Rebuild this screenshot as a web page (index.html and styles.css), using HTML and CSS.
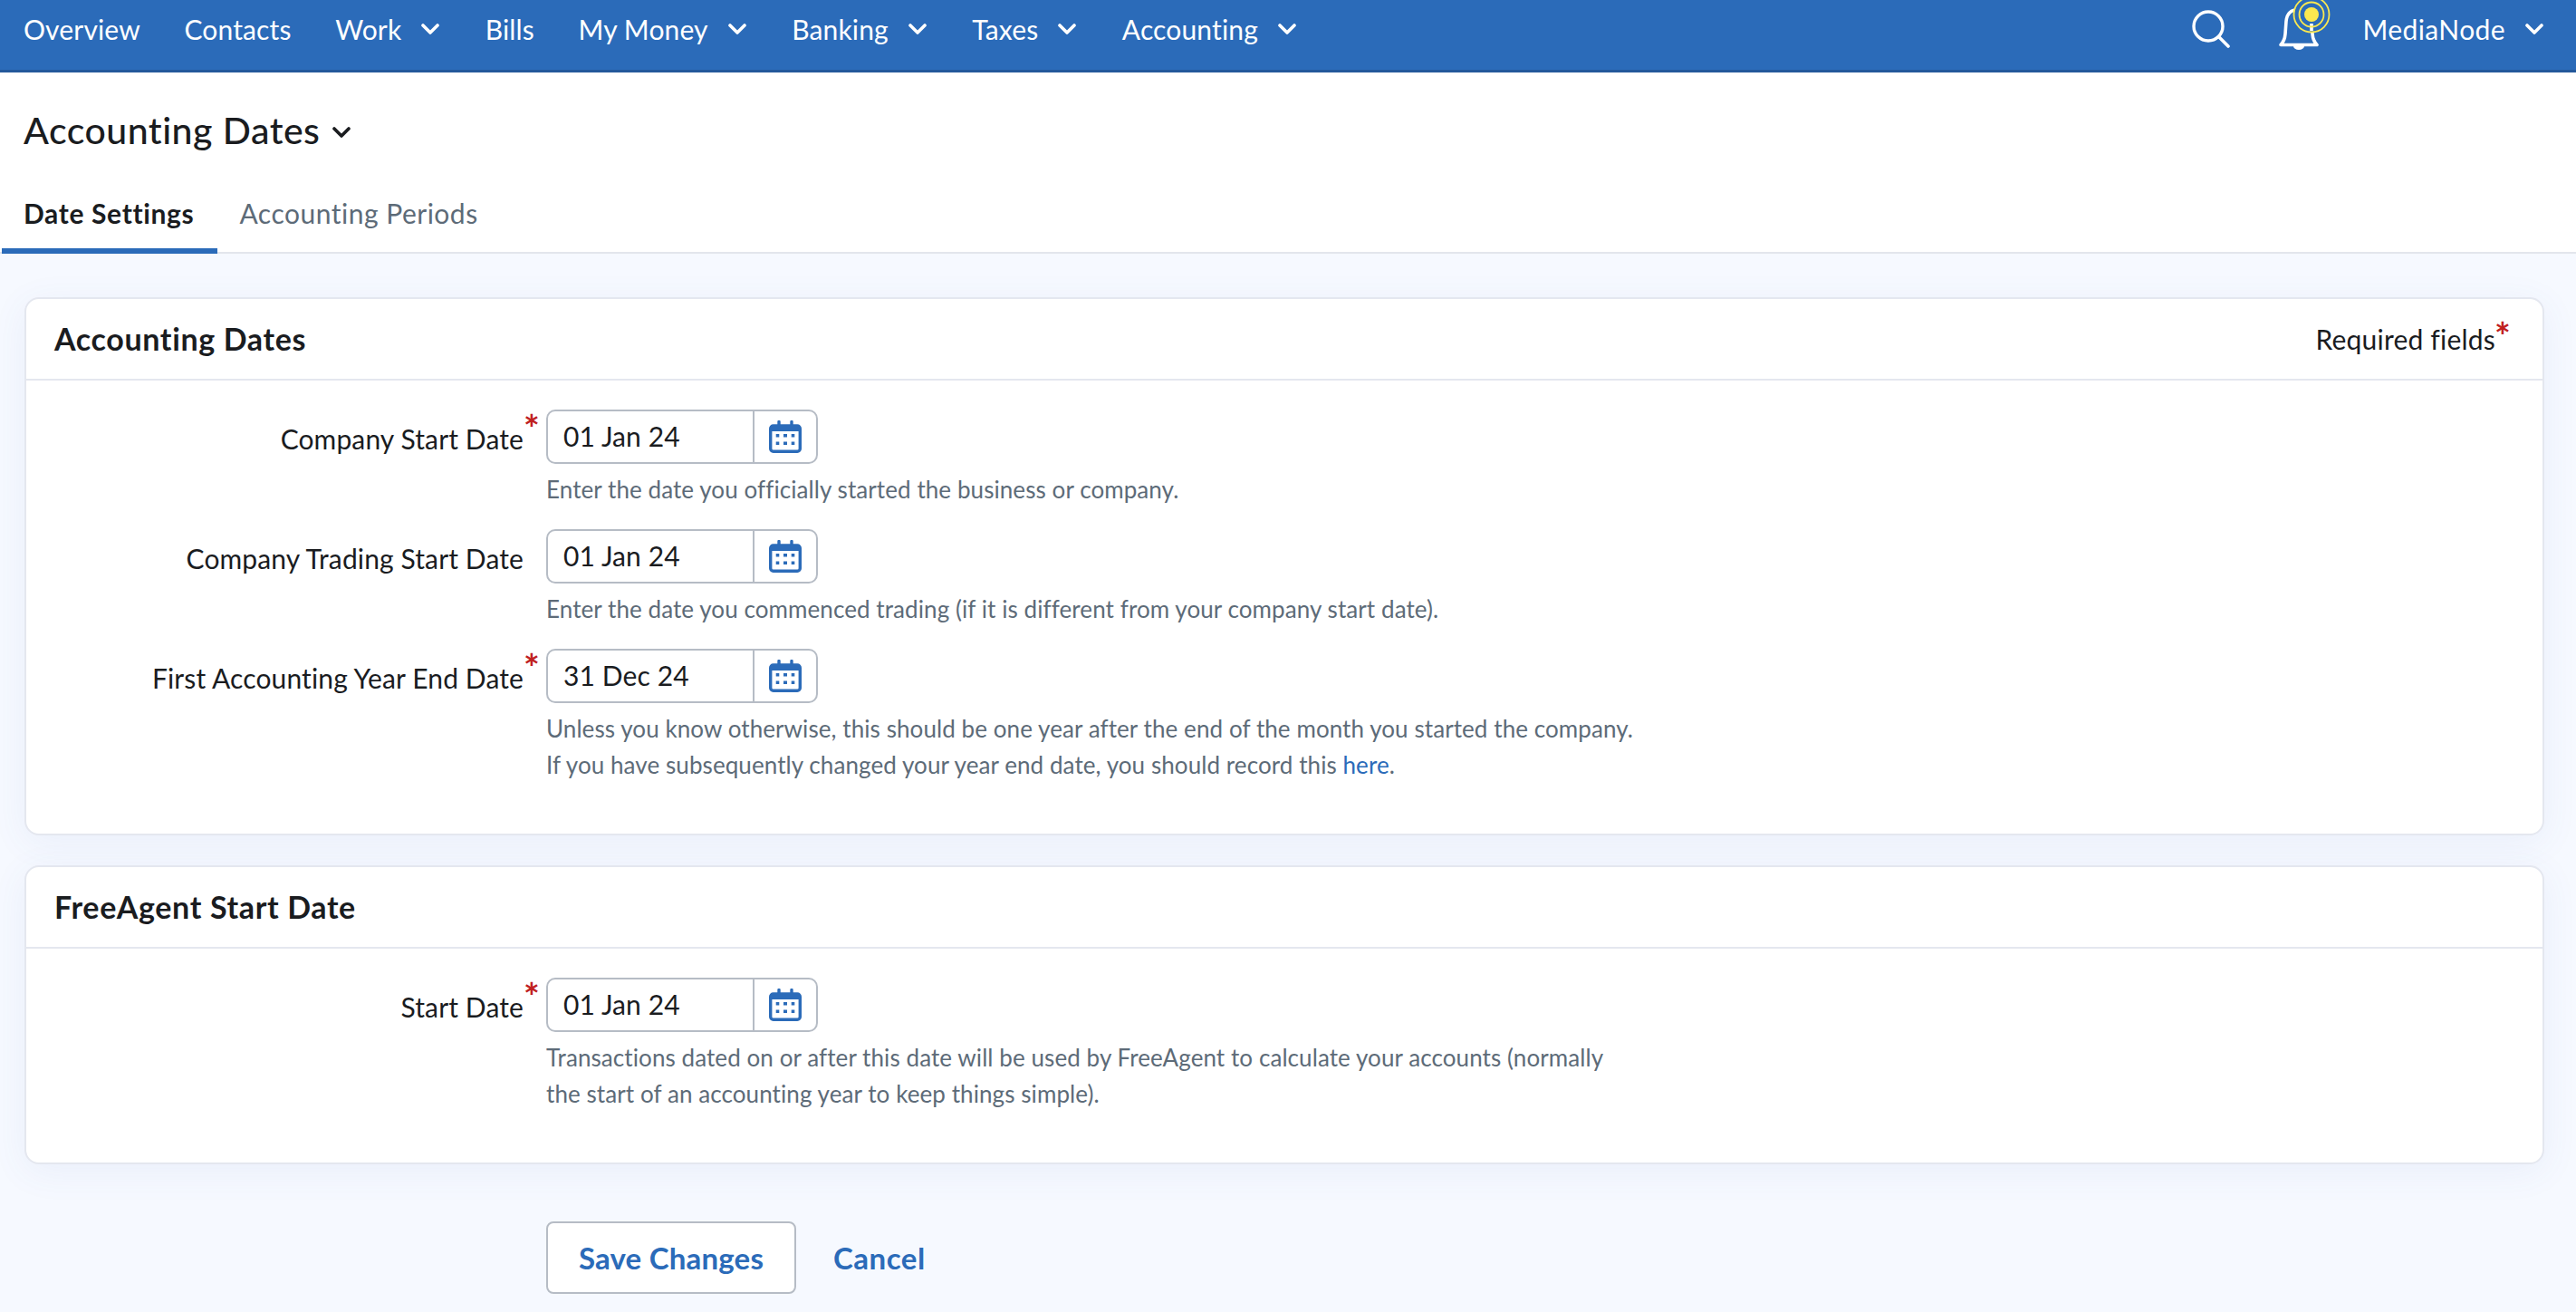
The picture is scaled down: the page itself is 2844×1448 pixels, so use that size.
FILE: index.html
```html
<!DOCTYPE html>
<html lang="en">
<head>
<meta charset="utf-8">
<title>Accounting Dates</title>
<link rel="stylesheet" href="styles.css">
</head>
<body>
<svg class="defs" width="0" height="0" aria-hidden="true">
  <symbol id="chev" viewBox="0 0 20 12"><path d="M2 2l8 8 8-8" fill="none" stroke="currentColor" stroke-width="3.6" stroke-linecap="round" stroke-linejoin="round"/></symbol>
  <symbol id="cal" viewBox="0 0 36 36">
    <path d="M11 1.500v6M25 1.500v6" stroke="currentColor" stroke-width="3.400" stroke-linecap="round" fill="none"/>
    <rect x="1.700" y="6" width="32.600" height="28.300" rx="3" fill="none" stroke="currentColor" stroke-width="3.400"/>
    <path d="M1.700 9h32.600" stroke="currentColor" stroke-width="6"/>
    <path fill="currentColor" d="M7.700 15h3.600v3.600H7.700zM16 15h4v3.600h-4zM24.700 15h3.600v3.600h-3.600zM7.700 23.500h3.600v3.600H7.700zM16 23.500h4v3.600h-4zM24.700 23.500h3.600v3.600h-3.600z"/>
  </symbol>
</svg>
<header class="topbar">
  <nav class="nav-main">
    <a class="nav-link">Overview</a>
    <a class="nav-link">Contacts</a>
    <a class="nav-link">Work<svg class="nav-chev"><use href="#chev"/></svg></a>
    <a class="nav-link">Bills</a>
    <a class="nav-link">My Money<svg class="nav-chev"><use href="#chev"/></svg></a>
    <a class="nav-link">Banking<svg class="nav-chev"><use href="#chev"/></svg></a>
    <a class="nav-link">Taxes<svg class="nav-chev"><use href="#chev"/></svg></a>
    <a class="nav-link">Accounting<svg class="nav-chev"><use href="#chev"/></svg></a>
  </nav>
  <div class="nav-right">
    <svg class="icon-search" viewBox="0 0 42 42"><circle cx="18" cy="18" r="16" fill="none" stroke="#fff" stroke-width="3.4"/><path d="M30 30l10 10" stroke="#fff" stroke-width="3.6" stroke-linecap="round"/></svg>
    <svg class="icon-bell" viewBox="0 0 64 54">
      <path d="M2 49.5c3-3 4.500-6 5-12l1-14c.8-9 6-13 14-13s13 4 14 13l1 14c.5 6 2 9 5 12z" fill="none" stroke="#fff" stroke-width="3.6" stroke-linejoin="round"/>
      <path d="M16 51h12a6 4 0 0 1-12 0z" fill="#fff"/>
      <circle cx="36" cy="16" r="19" fill="#2b6bb9"/>
      <path d="M36 26v8" stroke="#fff" stroke-width="3.6"/>
      <circle cx="36" cy="16" r="8" fill="#fbe84f"/>
      <circle cx="36" cy="16" r="13.500" fill="none" stroke="#fbe84f" stroke-width="1.800"/>
      <circle cx="36" cy="16" r="19.500" fill="none" stroke="#fbe84f" stroke-width="1.800"/>
    </svg>
    <a class="nav-link nav-user">MediaNode<svg class="nav-chev"><use href="#chev"/></svg></a>
  </div>
</header>

<div class="page-head">
  <h1 class="page-title">Accounting Dates<svg class="title-chev"><use href="#chev"/></svg></h1>
  <div class="tabs">
    <a class="tab tab-active">Date Settings</a>
    <a class="tab">Accounting Periods</a>
  </div>
</div>

<main class="content">
  <section class="card">
    <div class="card-head">
      <h2 class="card-title">Accounting Dates</h2>
      <span class="req-note">Required fields<span class="star star-note">*</span></span>
    </div>
    <div class="card-body">
      <div class="field">
        <label class="field-label"><span class="label-text">Company Start Date<span class="star star-abs">*</span></span></label>
        <div class="field-main">
          <div class="date-input"><span class="date-value">01 Jan 24</span><span class="date-btn"><svg class="cal"><use href="#cal"/></svg></span></div>
          <p class="hint">Enter the date you officially started the business or company.</p>
        </div>
      </div>
      <div class="field">
        <label class="field-label"><span class="label-text">Company Trading Start Date</span></label>
        <div class="field-main">
          <div class="date-input"><span class="date-value">01 Jan 24</span><span class="date-btn"><svg class="cal"><use href="#cal"/></svg></span></div>
          <p class="hint">Enter the date you commenced trading (if it is different from your company start date).</p>
        </div>
      </div>
      <div class="field">
        <label class="field-label"><span class="label-text">First Accounting Year End Date<span class="star star-abs">*</span></span></label>
        <div class="field-main">
          <div class="date-input"><span class="date-value">31 Dec 24</span><span class="date-btn"><svg class="cal"><use href="#cal"/></svg></span></div>
          <p class="hint">Unless you know otherwise, this should be one year after the end of the month you started the company.<br>If you have subsequently changed your year end date, you should record this <a class="link">here</a>.</p>
        </div>
      </div>
    </div>
  </section>

  <section class="card">
    <div class="card-head">
      <h2 class="card-title">FreeAgent Start Date</h2>
    </div>
    <div class="card-body">
      <div class="field">
        <label class="field-label"><span class="label-text">Start Date<span class="star star-abs">*</span></span></label>
        <div class="field-main">
          <div class="date-input"><span class="date-value">01 Jan 24</span><span class="date-btn"><svg class="cal"><use href="#cal"/></svg></span></div>
          <p class="hint">Transactions dated on or after this date will be used by FreeAgent to calculate your accounts (normally<br>the start of an accounting year to keep things simple).</p>
        </div>
      </div>
    </div>
  </section>

  <div class="actions">
    <button class="btn-save">Save Changes</button>
    <a class="btn-cancel">Cancel</a>
  </div>
</main>
</body>
</html>
```
FILE: styles.css
```css
* { box-sizing: border-box; }
html, body { margin: 0; padding: 0; }
body {
  height: 1448px;
  overflow: hidden;
  background: #f6f9ff;
  color: #1a1c1f;
  font-family: "Lato", "Liberation Sans", sans-serif;
  font-size: 30px;
}
.defs { position: absolute; }
.topbar {
  display: flex;
  justify-content: space-between;
  height: 80px;
  background: #2b6bb9;
  border-bottom: 3px solid #24589b;
  color: #fff;
}
.nav-main { display: flex; gap: 48.5px; padding-left: 26px; height: 64px; align-items: center; }
.nav-link { display: flex; align-items: center; color: #fff; letter-spacing: .15px; white-space: nowrap; }
.nav-chev { width: 20px; height: 12px; margin-left: 22px; margin-right: 2px; }
.nav-right { display: flex; align-items: center; height: 64px; padding-right: 34px; position: relative; }
.nav-user { letter-spacing: .4px; }
.icon-search { width: 42px; height: 42px; margin-right: 54px; }
.icon-bell { width: 64px; height: 54px; margin-right: 28px; margin-top: -10px; overflow: visible; }
.page-head { background: #fff; border-bottom: 2px solid #e3e6ec; height: 200px; }
.page-title {
  display: flex; margin: 0; padding: 40px 0 0 26px;
  height: 128px; font-size: 41px; font-weight: 500; line-height: 48px; letter-spacing: .5px;
  align-items: flex-start;
}
.title-chev { width: 20px; height: 12px; margin: 20px 0 0 14px; }
.tabs { display: flex; padding-left: 2px; height: 72px; margin-bottom: -2px; }
.tab { padding: 7px 24px 0; height: 72px; line-height: 40px; color: #5d6b78; letter-spacing: .5px; }
.tab-active { color: #1a1c1f; font-weight: 700; letter-spacing: .65px; padding-right: 26px; border-bottom: 6px solid #2b6bb9; }
.content { padding: 48px 35px 0 27px; }
.card {
  background: #fff;
  border: 2px solid #e4e7ef;
  border-radius: 16px;
  box-shadow: 0 8px 40px rgba(70, 100, 190, .07);
  margin-bottom: 33px;
}
.card-head {
  display: flex; justify-content: space-between; align-items: center;
  height: 90px; padding: 0 52px 0 31px; border-bottom: 2px solid #e4e7ef;
}
.card-title { margin: 0; font-size: 34px; font-weight: 700; line-height: 40px; letter-spacing: .65px; }
.req-note { position: relative; font-size: 30px; letter-spacing: .2px; }
.star { color: #c0211f; font-weight: 700; font-size: 42px; line-height: 1; }
.star-note { position: absolute; left: 100%; margin-left: -1px; top: -6px; }
.star-abs { position: absolute; left: 100%; top: -14px; }
.card-body { padding: 32px 0 56px; }
.field { display: flex; margin-bottom: 24px; }
.field:last-child { margin-bottom: 0; }
.field-label { width: 574px; padding: 12px 25px 0 0; text-align: right; line-height: 40px; }
.label-text { position: relative; letter-spacing: .12px; }
.date-input {
  display: flex; width: 300px; height: 60px;
  border: 2px solid #b6bcc5; border-radius: 10px; background: #fff;
}
.date-value { width: 226px; padding-left: 17px; line-height: 54px; letter-spacing: .1px; }
.date-btn { flex: 1; display: flex; align-items: center; justify-content: center; border-left: 2px solid #b6bcc5; }
.cal { width: 36px; height: 36px; color: #2b6bb9; }
.hint { margin: 8px 0 0; font-size: 26px; line-height: 40px; color: #5d6b78; letter-spacing: .08px; }
.link { color: #2b6bb9; }
.actions { display: flex; align-items: center; margin: 63px 0 0 576px; }
.btn-save {
  width: 276px; height: 80px; background: #fff; border: 2px solid #b6bcc5; border-radius: 8px;
  color: #2b6bb9; font: 700 33px "Lato", sans-serif; letter-spacing: .2px;
}
.btn-cancel { margin-left: 41px; color: #2b6bb9; font-weight: 700; font-size: 33px; letter-spacing: .5px; }
```
